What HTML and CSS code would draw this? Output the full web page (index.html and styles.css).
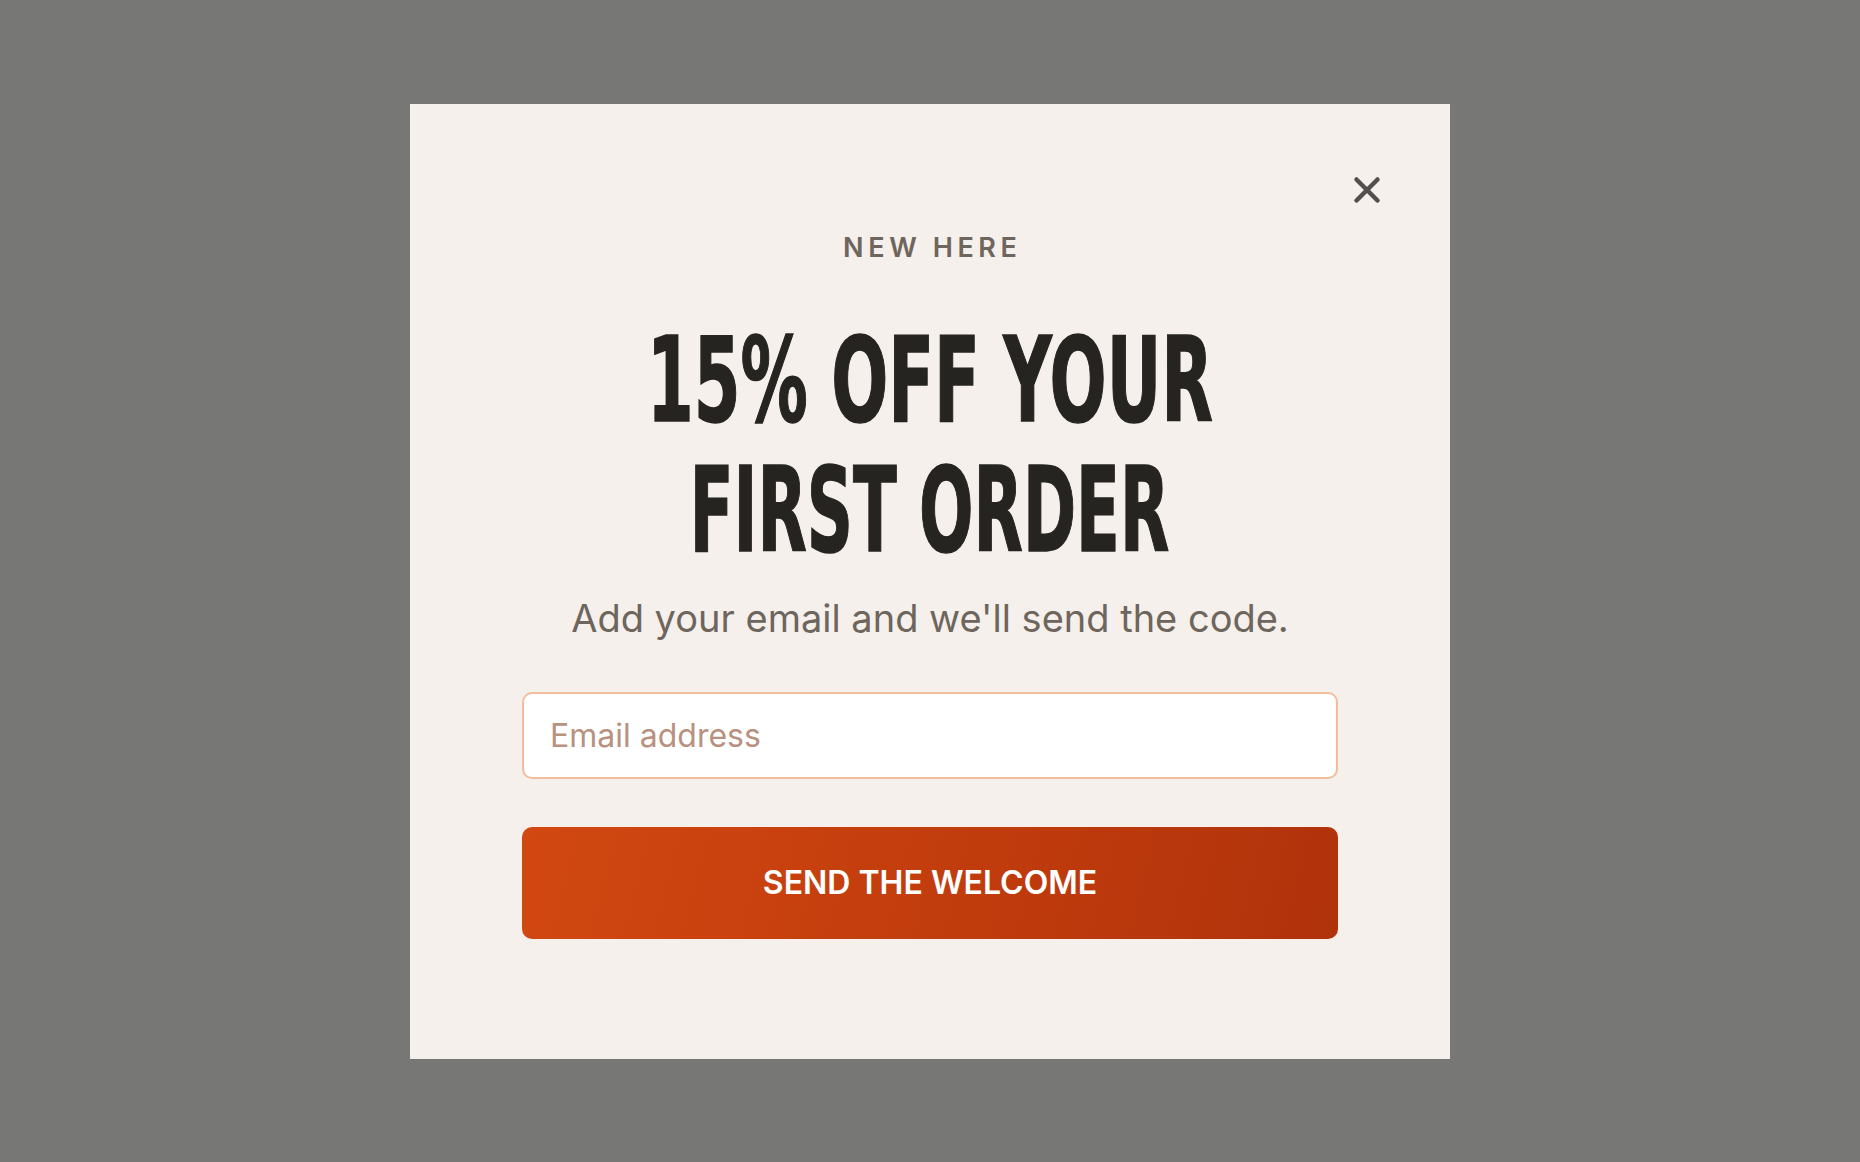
FILE: index.html
```html
<!DOCTYPE html>
<html lang="en">
<head>
<meta charset="utf-8">
<title>Welcome offer</title>
<link rel="stylesheet" href="styles.css">
</head>
<body>
  <div class="overlay">
    <section class="modal" role="dialog" aria-labelledby="offer-title">
      <button class="close" type="button" aria-label="Close">
        <svg width="28" height="28" viewBox="0 0 28 28" aria-hidden="true">
          <line x1="3.5" y1="3.5" x2="24.5" y2="24.5"/>
          <line x1="24.5" y1="3.5" x2="3.5" y2="24.5"/>
        </svg>
      </button>
      <p class="eyebrow">NEW HERE</p>
      <h1 class="title" id="offer-title">
        <span class="title-line title-line--wide">15% OFF YOUR</span>
        <span class="title-line">FIRST ORDER</span>
      </h1>
      <p class="lead">Add your email and we'll send the code.</p>
      <form class="signup">
        <input class="email" type="email" placeholder="Email address">
        <button class="submit" type="submit">SEND THE WELCOME</button>
      </form>
    </section>
  </div>
</body>
</html>
```
FILE: styles.css
```css
* {
  box-sizing: border-box;
}

html, body {
  margin: 0;
  padding: 0;
}

body {
  background: #777775;
  font-family: Inter, "Noto Sans", "Liberation Sans", sans-serif;
}

.overlay {
  min-height: 100vh;
  display: flex;
  align-items: center;
  justify-content: center;
}

.modal {
  position: relative;
  width: 1040px;
  background: #f5f0eb;
  padding: 130px 112px 120px;
  display: flex;
  flex-direction: column;
  align-items: stretch;
  text-align: center;
}

.close {
  position: absolute;
  top: 72px;
  right: 69px;
  width: 28px;
  height: 28px;
  padding: 0;
  border: 0;
  background: none;
  cursor: pointer;
  display: block;
}

.close svg {
  display: block;
}

.close line {
  stroke: #52504e;
  stroke-width: 4.5;
  stroke-linecap: round;
}

.eyebrow {
  margin: 0;
  font-size: 27px;
  line-height: 27px;
  font-weight: 600;
  letter-spacing: 0.17em;
  padding-left: 0.17em;
  color: #6e655d;
}

/* Condensed display heading: a heavy sans squeezed horizontally */
.title {
  margin: 55px 0 0;
  display: flex;
  flex-direction: column;
  align-items: center;
  font-family: "DejaVu Sans", "Liberation Sans", sans-serif;
  font-weight: 700;
  font-size: 117px;
  line-height: 130px;
  color: #262421;
  white-space: nowrap;
}

.title-line {
  display: block;
  transform: scaleX(0.548);
  -webkit-text-stroke: 1.5px #262421;
}

.title-line--wide {
  transform: scaleX(0.574);
}

.lead {
  margin: 20px 0 0;
  font-size: 38px;
  line-height: 44px;
  font-weight: 400;
  color: #6e655d;
}

.signup {
  margin: 52px 0 0;
  display: flex;
  flex-direction: column;
  gap: 48px;
}

.email {
  display: block;
  width: 100%;
  height: 87px;
  padding: 0 26px;
  border: 2px solid #f2bd9c;
  border-radius: 10px;
  background: #ffffff;
  font-family: inherit;
  font-size: 32px;
  color: #3a332e;
  outline: none;
}

.email::placeholder {
  color: #b89180;
  opacity: 1;
}

.submit {
  display: block;
  width: 100%;
  height: 112px;
  border: 0;
  border-radius: 10px;
  background: linear-gradient(105deg, #d14811 0%, #c13c0d 55%, #b0320b 100%);
  color: #ffffff;
  font-family: inherit;
  font-size: 32px;
  font-weight: 600;
  cursor: pointer;
}
```
